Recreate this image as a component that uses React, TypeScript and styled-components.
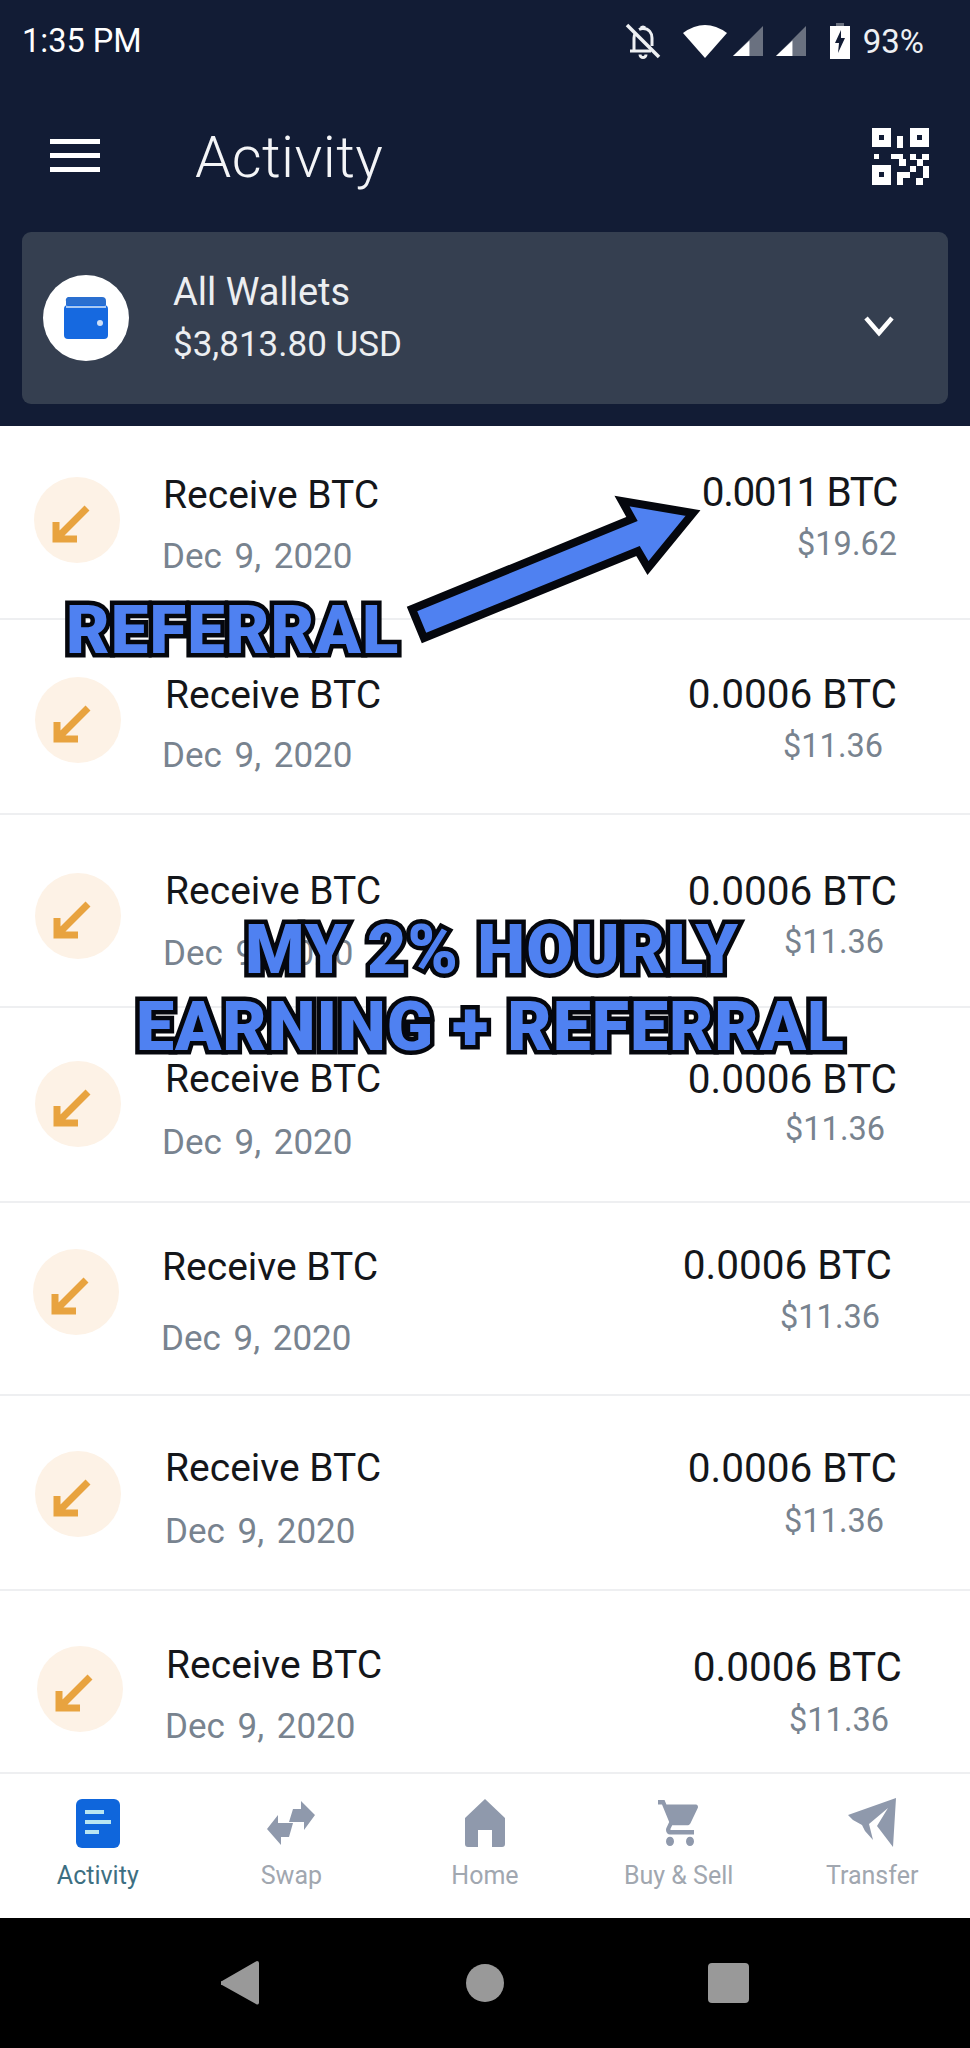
import React from 'react';
import styled, { createGlobalStyle } from 'styled-components';

const GlobalStyle = createGlobalStyle`
  html, body {
    margin: 0;
    padding: 0;
    background: #fff;
  }
  body {
    font-family: Roboto, "Liberation Sans", sans-serif;
  }
`;

const Page = styled.div`
  position: relative;
  width: 970px;
  height: 2048px;
  overflow: hidden;
  display: flex;
  flex-direction: column;
`;

const Header = styled.header`
  background: #121c35;
  height: 426px;
  flex: none;
  padding: 0 22px;
  box-sizing: border-box;
  color: #fff;
`;

const StatusBar = styled.div`
  height: 82px;
  display: flex;
  align-items: center;
  font-size: 32.5px;
`;

const StatusIcons = styled.div`
  margin-left: auto;
  margin-right: 24px;
  display: flex;
  align-items: center;
`;

const Percent = styled.span`
  font-size: 33px;
  margin-left: 13px;
  color: #eef0f3;
`;

const Toolbar = styled.div`
  height: 150px;
  display: flex;
  align-items: center;
  padding: 0 18px 0 28px;
`;

const Menu = styled.div`
  width: 50px;
  height: 33px;
  display: flex;
  flex-direction: column;
  justify-content: space-between;
  margin-top: -3px;

  span {
    height: 5px;
    background: #fff;
  }
`;

const PageTitle = styled.h1`
  margin: 0 0 0 95px;
  font-size: 58px;
  font-weight: 300;
  letter-spacing: 0.4px;
  color: #f4f5f7;
`;

const QrSlot = styled.div`
  margin-left: auto;
  display: flex;
`;

const WalletCard = styled.div`
  height: 172px;
  background: #353f50;
  border-radius: 9px;
  display: flex;
  align-items: center;
  padding: 0 53px 0 21px;
`;

const WalletBadge = styled.div`
  width: 86px;
  height: 86px;
  border-radius: 50%;
  background: #fff;
  display: flex;
  align-items: center;
  justify-content: center;
  margin-top: -1px;
`;

const WalletText = styled.div`
  margin-left: 44px;
  display: flex;
  flex-direction: column;
  gap: 15px;
  margin-top: 0;
`;

const WalletName = styled.div`
  font-size: 38px;
  line-height: 38px;
  color: #eceef1;
`;

const WalletTotal = styled.div`
  font-size: 35px;
  line-height: 38px;
  color: #eceef1;
`;

const Chevron = styled.div`
  margin-left: auto;
  display: flex;
  margin-top: 16px;
`;

const List = styled.main`
  flex: none;
  background: #fff;
`;

const Row = styled.div<{ $h: number; $left: number; $right: number }>`
  height: ${(p) => p.$h}px;
  box-sizing: border-box;
  border-bottom: 2px solid #eeeff1;
  display: flex;
  align-items: flex-start;
  padding: 0 ${(p) => p.$right}px 0 ${(p) => p.$left}px;
`;

const ArrowBadge = styled.div<{ $top: number }>`
  width: 86px;
  height: 86px;
  flex: none;
  border-radius: 50%;
  background: #fdf2e6;
  margin-top: ${(p) => p.$top}px;
  display: flex;
`;

const RowText = styled.div<{ $top: number; $gap: number }>`
  margin-left: 43px;
  padding-top: ${(p) => p.$top}px;
  display: flex;
  flex-direction: column;
  gap: ${(p) => p.$gap}px;
`;

const RowTitle = styled.div<{ $shift: number }>`
  margin-left: ${(p) => p.$shift}px;
  font-size: 39px;
  line-height: 40px;
  color: #14161a;
  white-space: nowrap;
`;

const RowDate = styled.div<{ $shift: number }>`
  margin-left: ${(p) => p.$shift}px;
  font-size: 35px;
  line-height: 40px;
  color: #78838f;
  word-spacing: 4px;
  white-space: nowrap;
`;

const RowAmounts = styled.div<{ $top: number; $gap: number }>`
  margin-left: auto;
  padding-top: ${(p) => p.$top}px;
  display: flex;
  flex-direction: column;
  align-items: flex-end;
  gap: ${(p) => p.$gap}px;
`;

const Crypto = styled.div<{ $tight: boolean }>`
  font-size: 40.5px;
  line-height: 40px;
  letter-spacing: ${(p) => (p.$tight ? '-1.4px' : '0')};
  color: #14161a;
  white-space: nowrap;
`;

const Fiat = styled.div<{ $inset: number }>`
  margin-right: ${(p) => p.$inset}px;
  font-size: 32.5px;
  line-height: 40px;
  color: #78838f;
`;

const TabBar = styled.nav`
  height: 144px;
  flex: none;
  background: #fff;
  display: grid;
  grid-template-columns: repeat(5, 1fr);
  padding: 0 1px;
`;

const Tab = styled.div`
  display: flex;
  flex-direction: column;
  align-items: center;
  padding-top: 24px;
`;

const IconSlot = styled.div`
  height: 50px;
  display: flex;
  align-items: center;
  justify-content: center;
`;

const TabLabel = styled.div<{ $active?: boolean }>`
  margin-top: 14px;
  font-size: 25px;
  line-height: 28px;
  color: ${(p) => (p.$active ? '#3d6f82' : '#a1a7b0')};
`;

const SystemNav = styled.div`
  height: 130px;
  flex: none;
  background: #000;
  display: grid;
  grid-template-columns: repeat(3, 243px);
  justify-content: center;
  align-items: center;
  justify-items: center;
`;

const NavBack = styled.svg`
  margin-left: -4px;
`;

const NavCircle = styled.div`
  width: 38px;
  height: 38px;
  border-radius: 50%;
  background: #999;
`;

const NavSquare = styled.div`
  width: 41px;
  height: 40px;
  border-radius: 4px;
  background: #999;
`;

const Caption = styled.div<{ $x: number; $y: number; $size: number; $spacing: number }>`
  position: absolute;
  left: ${(p) => p.$x}px;
  top: ${(p) => p.$y}px;
  font-family: Roboto, sans-serif;
  font-weight: 900;
  font-size: ${(p) => p.$size}px;
  letter-spacing: ${(p) => p.$spacing}px;
  line-height: 1;
  white-space: nowrap;
  color: #4f81f1;
  -webkit-text-stroke: 9px #05070d;
  paint-order: stroke fill;
  stroke-linejoin: round;
`;

const ArrowOverlay = styled.svg`
  position: absolute;
  left: 0;
  top: 0;
  pointer-events: none;
`;

const rows = [
  { h: 194, left: 34, right: 73, icon: 51, title: 49, gap: 22, titleX: 0, dateX: -1, amt: 46, amtGap: 12, inset: 0, crypto: '0.0011 BTC', fiat: '$19.62' },
  { h: 195, left: 35, right: 73, icon: 57, title: 55, gap: 21, titleX: 1, dateX: -2, amt: 54, amtGap: 12, inset: 14, crypto: '0.0006 BTC', fiat: '$11.36' },
  { h: 193, left: 35, right: 73, icon: 58, title: 56, gap: 23, titleX: 1, dateX: -1, amt: 56, amtGap: 11, inset: 13, crypto: '0.0006 BTC', fiat: '$11.36' },
  { h: 195, left: 35, right: 73, icon: 53, title: 51, gap: 24, titleX: 1, dateX: -2, amt: 51, amtGap: 10, inset: 12, crypto: '0.0006 BTC', fiat: '$11.36' },
  { h: 193, left: 33, right: 78, icon: 46, title: 44, gap: 32, titleX: 0, dateX: -1, amt: 42, amtGap: 12, inset: 12, crypto: '0.0006 BTC', fiat: '$11.36' },
  { h: 195, left: 35, right: 73, icon: 55, title: 52, gap: 24, titleX: 1, dateX: 1, amt: 52, amtGap: 13, inset: 13, crypto: '0.0006 BTC', fiat: '$11.36' },
  { h: 183, left: 37, right: 68, icon: 55, title: 54, gap: 22, titleX: 0, dateX: -1, amt: 56, amtGap: 13, inset: 13, crypto: '0.0006 BTC', fiat: '$11.36' },
];

function ReceiveArrow() {
  return (
    <svg width="86" height="86" viewBox="0 0 86 86" fill="none">
      <path d="M22 45V62H43M22 62L53 31" stroke="#e8a33f" strokeWidth="7" strokeLinejoin="miter" />
    </svg>
  );
}

function QrIcon() {
  return (
    <svg width="58" height="58" viewBox="0 0 58 58" fill="#fff" fillRule="evenodd">
      <path d="M0 0H19V19H0ZM7 7V12H12V7Z" />
      <path d="M38 0H57V19H38ZM45 7V12H50V7Z" />
      <path d="M0 37H19V57H0ZM7 44V49H12V44Z" />
      <path d="M25 8H31V20H25Z" />
      <path d="M2 26H7V31H2Z" />
      <path d="M19 26H31V31H34V38H27V31H19Z" />
      <path d="M38 26H44V31H50V26H57V32H51V38H57V50H51V38H45V32H38Z" />
      <path d="M25 44H38V38H44V44H38V50H31V57H25Z" />
      <path d="M44 50H51V57H44Z" />
    </svg>
  );
}

function WalletIcon() {
  return (
    <svg width="44" height="42" viewBox="0 0 44 42">
      <path d="M5 0H38a4 4 0 0 1 4 4V8H2V4a3 3 0 0 1 3-4Z" fill="#2a6fd0" />
      <rect x="0" y="8" width="44" height="34" rx="4" fill="#1669e0" />
      <rect x="2" y="9" width="40" height="2" fill="#a9c8f2" />
      <circle cx="36" cy="26" r="3" fill="#cfe0f8" />
    </svg>
  );
}

function MutedBell() {
  return (
    <svg width="36" height="36" viewBox="0 0 36 36" fill="none" stroke="#eef0f3" strokeWidth="3">
      <path d="M9 27V15C9 13 9.500 11.500 10.500 10M14 6.500C15 6 16 5.500 18 5.500C24 5.500 27 10 27 15V23" />
      <path d="M5 28H26" />
      <path d="M15 31.500a3 3 0 0 0 6 0" />
      <path d="M16 5a2.500 2.500 0 0 1 4 0" />
      <path d="M2 2L34 34" strokeWidth="3.500" />
    </svg>
  );
}

const WifiMark = styled.svg`
  margin-left: 22px;
`;

function WifiIcon() {
  return (
    <WifiMark width="44" height="33" viewBox="0 0 44 33">
      <path d="M0 8Q22 -8 44 8L22 33Z" fill="#fff" />
    </WifiMark>
  );
}

const SignalMark = styled.svg<{ $gap: number }>`
  margin-left: ${(p) => p.$gap}px;
`;

function SignalIcon({ gap }: { gap: number }) {
  return (
    <SignalMark $gap={gap} width="30" height="30" viewBox="0 0 31 31">
      <path d="M31 0V31H0Z" fill="#6a7180" />
      <path d="M17 15V31H0Z" fill="#fff" />
    </SignalMark>
  );
}

const BatteryMark = styled.svg`
  margin-left: 24px;
`;

function BatteryIcon() {
  return (
    <BatteryMark width="20" height="36" viewBox="0 0 20 36">
      <path d="M6 0H14V3H6Z" fill="#6a7180" />
      <path d="M0 3H20V36H0ZM11 7L5 20H9L8 30L15 15H11Z" fill="#fff" fillRule="evenodd" />
    </BatteryMark>
  );
}

function ActivityIcon() {
  return (
    <svg width="44" height="49" viewBox="0 0 44 49">
      <rect width="44" height="49" rx="6" fill="#0f66dc" />
      <rect x="9" y="11" width="19" height="4" fill="#b9e6f2" />
      <rect x="9" y="21" width="26" height="4" fill="#b9e6f2" />
      <rect x="9" y="31" width="14" height="4" fill="#b9e6f2" />
    </svg>
  );
}

function SwapIcon() {
  return (
    <svg width="48" height="44" viewBox="0 0 48 44" fill="#8f99ac">
      <path d="M34 0L48 14L37 29V21H22L26 8H34Z" />
      <path d="M14 44L0 28L11 14V22H26L22 36H14Z" />
    </svg>
  );
}

function HomeIcon() {
  return (
    <svg width="40" height="48" viewBox="0 0 40 48" fill="#8f99ac">
      <path d="M20 0L40 19V45a3 3 0 0 1-3 3H27V31H13V48H3a3 3 0 0 1-3-3V19Z" />
    </svg>
  );
}

function CartIcon() {
  return (
    <svg width="42" height="46" viewBox="1 2 21 20" preserveAspectRatio="none" fill="#8f99ac">
      <path d="M7 18c-1.1 0-1.99.9-1.99 2S5.9 22 7 22s2-.9 2-2-.9-2-2-2zM1 2v2h2l3.6 7.59-1.35 2.45c-.16.28-.25.61-.25.96 0 1.1.9 2 2 2h12v-2H7.42c-.14 0-.25-.11-.25-.25l.03-.12.9-1.63h7.45c.75 0 1.41-.41 1.75-1.03l3.58-6.49c.08-.14.12-.31.12-.48 0-.55-.45-1-1-1H5.21l-.94-2H1zm16 16c-1.1 0-1.99.9-1.99 2s.89 2 1.99 2 2-.9 2-2-.9-2-2-2z" />
    </svg>
  );
}

function PlaneIcon() {
  return (
    <svg width="48" height="50" viewBox="0 0 48 50" fill="#8f99ac">
      <path d="M48 0L45 49L29 28L40 10L21 26L25 42L17 33L14 27L5 22L0 17Z" />
    </svg>
  );
}

export default function App() {
  return (
    <Page>
      <GlobalStyle />
      <Header>
        <StatusBar>
          <span>1:35 PM</span>
          <StatusIcons>
            <MutedBell />
            <WifiIcon />
            <SignalIcon gap={6} />
            <SignalIcon gap={13} />
            <BatteryIcon />
            <Percent>93%</Percent>
          </StatusIcons>
        </StatusBar>
        <Toolbar>
          <Menu>
            <span />
            <span />
            <span />
          </Menu>
          <PageTitle>Activity</PageTitle>
          <QrSlot>
            <QrIcon />
          </QrSlot>
        </Toolbar>
        <WalletCard>
          <WalletBadge>
            <WalletIcon />
          </WalletBadge>
          <WalletText>
            <WalletName>All Wallets</WalletName>
            <WalletTotal>$3,813.80 USD</WalletTotal>
          </WalletText>
          <Chevron>
            <svg width="32" height="22" viewBox="0 0 32 22" fill="none">
              <path d="M3 3L16 18L29 3" stroke="#fff" strokeWidth="4.5" />
            </svg>
          </Chevron>
        </WalletCard>
      </Header>
      <List>
        {rows.map((r, i) => (
          <Row key={i} $h={r.h} $left={r.left} $right={r.right}>
            <ArrowBadge $top={r.icon}>
              <ReceiveArrow />
            </ArrowBadge>
            <RowText $top={r.title} $gap={r.gap}>
              <RowTitle $shift={r.titleX}>Receive BTC</RowTitle>
              <RowDate $shift={r.dateX}>Dec 9, 2020</RowDate>
            </RowText>
            <RowAmounts $top={r.amt} $gap={r.amtGap}>
              <Crypto $tight={i === 0}>{r.crypto}</Crypto>
              <Fiat $inset={r.inset}>{r.fiat}</Fiat>
            </RowAmounts>
          </Row>
        ))}
      </List>
      <TabBar>
        <Tab>
          <IconSlot>
            <ActivityIcon />
          </IconSlot>
          <TabLabel $active>Activity</TabLabel>
        </Tab>
        <Tab>
          <IconSlot>
            <SwapIcon />
          </IconSlot>
          <TabLabel>Swap</TabLabel>
        </Tab>
        <Tab>
          <IconSlot>
            <HomeIcon />
          </IconSlot>
          <TabLabel>Home</TabLabel>
        </Tab>
        <Tab>
          <IconSlot>
            <CartIcon />
          </IconSlot>
          <TabLabel>Buy &amp; Sell</TabLabel>
        </Tab>
        <Tab>
          <IconSlot>
            <PlaneIcon />
          </IconSlot>
          <TabLabel>Transfer</TabLabel>
        </Tab>
      </TabBar>
      <SystemNav>
        <NavBack width="38" height="44" viewBox="0 0 38 44">
          <path d="M36 0a2 2 0 0 1 2 2V42a2 2 0 0 1-3 1L1 24a2 2 0 0 1 0-4L34 1Z" fill="#999" />
        </NavBack>
        <NavCircle />
        <NavSquare />
      </SystemNav>

      <ArrowOverlay width="970" height="2048" viewBox="0 0 970 2048">
        <path
          d="M412 609L632 519L622 501L693 513L648 568L638 551L424 638Z"
          fill="#4f81f1"
          stroke="#05070d"
          strokeWidth="8"
          strokeLinejoin="miter"
        />
      </ArrowOverlay>
      <Caption $x={66} $y={597} $size={67} $spacing={1.1}>REFERRAL</Caption>
      <Caption $x={245} $y={916} $size={68} $spacing={1.2}>MY 2% HOURLY</Caption>
      <Caption $x={136} $y={993} $size={68} $spacing={1}>EARNING + REFERRAL</Caption>
    </Page>
  );
}
